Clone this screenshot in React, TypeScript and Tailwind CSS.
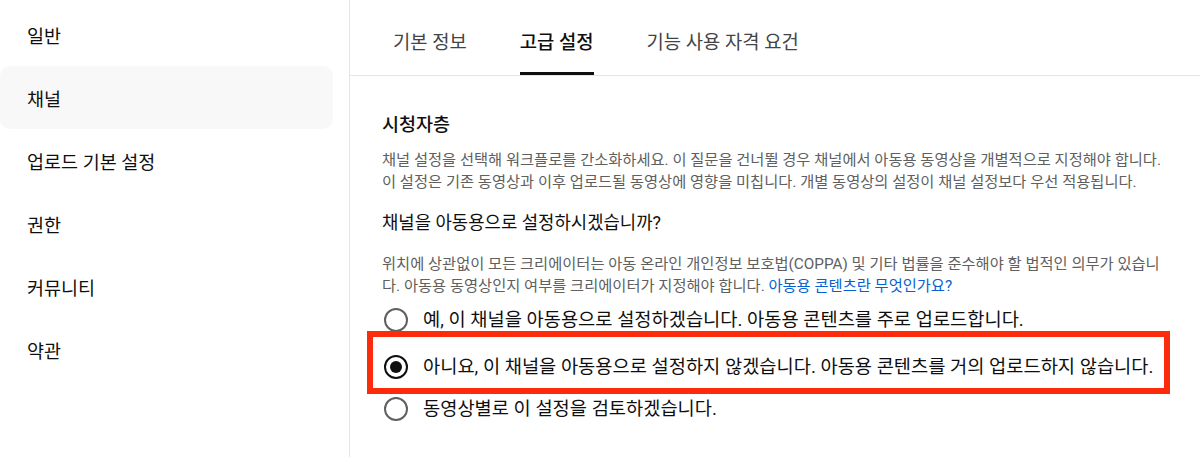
import React from "react";

const navItems = ["일반", "채널", "업로드 기본 설정", "권한", "커뮤니티", "약관"];
const tabs = ["기본 정보", "고급 설정", "기능 사용 자격 요건"];

const Radio = ({ checked }: { checked?: boolean }) => (
  <span
    className={`flex h-[24px] w-[24px] shrink-0 items-center justify-center rounded-full border-2 ${
      checked ? "border-[#0f0f0f]" : "border-[#606060]"
    }`}
  >
    {checked && <span className="h-[12px] w-[12px] rounded-full bg-[#0f0f0f]" />}
  </span>
);

export default function App() {
  return (
    <div
      className="flex h-[457px] w-[1200px] overflow-hidden bg-white text-[#0f0f0f]"
      style={{ fontFamily: 'Roboto, "Noto Sans CJK KR", sans-serif' }}
    >
      {/* Sidebar */}
      <aside className="w-[350px] shrink-0 border-r border-[#e5e5e5] pt-[3px]">
        {navItems.map((item) => (
          <div
            key={item}
            className={`flex h-[63px] w-[333px] items-center rounded-[10px] pl-[27px] pt-[7px] text-[18.5px] ${
              item === "채널" ? "bg-[#f8f8f8]" : ""
            }`}
          >
            {item}
          </div>
        ))}
      </aside>

      {/* Main */}
      <main className="flex-1">
        {/* Tabs */}
        <div className="flex h-[76px] items-end gap-[53px] border-b border-[#e5e5e5] pl-[43px]">
          {tabs.map((tab) => {
            const active = tab === "고급 설정";
            return (
              <div key={tab} className="flex h-full flex-col justify-end">
                <span
                  className={`text-[18.8px] leading-[24px] ${
                    active ? "font-medium text-[#0f0f0f]" : "text-[#444444]"
                  }`}
                >
                  {tab}
                </span>
                <span
                  className={`mt-[17px] h-[3px] w-full ${active ? "bg-[#0f0f0f]" : "bg-transparent"}`}
                />
              </div>
            );
          })}
        </div>

        {/* Content */}
        <div className="pl-[32px]">
          <h2 className="mt-[37px] text-[18.5px] font-medium leading-[24px]">시청자층</h2>
          <p className="mt-[12px] text-[15.3px] leading-[22px] text-[#606060]">
            <span className="block whitespace-nowrap">
              채널 설정을 선택해 워크플로를 간소화하세요. 이 질문을 건너뛸 경우 채널에서 아동용 동영상을 개별적으로 지정해야 합니다.
            </span>
            <span className="block whitespace-nowrap">
              이 설정은 기존 동영상과 이후 업로드될 동영상에 영향을 미칩니다. 개별 동영상의 설정이 채널 설정보다 우선 적용됩니다.
            </span>
          </p>

          <h3 className="mt-[18px] text-[17.8px] leading-[24px]">채널을 아동용으로 설정하시겠습니까?</h3>
          <p className="mt-[18px] text-[15.3px] leading-[22px] text-[#606060]">
            <span className="block whitespace-nowrap">
              위치에 상관없이 모든 크리에이터는 아동 온라인 개인정보 보호법(COPPA) 및 기타 법률을 준수해야 할 법적인 의무가 있습니
            </span>
            <span className="block whitespace-nowrap">
              다. 아동용 동영상인지 여부를 크리에이터가 지정해야 합니다.{" "}
              <a className="text-[#065fd4]">아동용 콘텐츠란 무엇인가요?</a>
            </span>
          </p>

          <div className="mt-[3px] flex h-[40px] items-center gap-[15px] pl-[2px] text-[18.7px]">
            <Radio />
            <span>예, 이 채널을 아동용으로 설정하겠습니다. 아동용 콘텐츠를 주로 업로드합니다.</span>
          </div>

          <div className="relative mt-[7px] flex h-[40px] items-center gap-[15px] pl-[2px] text-[18.7px]">
            <Radio checked />
            <span>아니요, 이 채널을 아동용으로 설정하지 않겠습니다. 아동용 콘텐츠를 거의 업로드하지 않습니다.</span>
            {/* annotation box */}
            <div className="pointer-events-none absolute left-[-15px] top-[-16px] h-[63px] w-[803px] border-[6px] border-[#fb2b0c]" />
          </div>

          <div className="mt-[2px] flex h-[40px] items-center gap-[15px] pl-[2px] text-[18.7px]">
            <Radio />
            <span>동영상별로 이 설정을 검토하겠습니다.</span>
          </div>
        </div>
      </main>
    </div>
  );
}
